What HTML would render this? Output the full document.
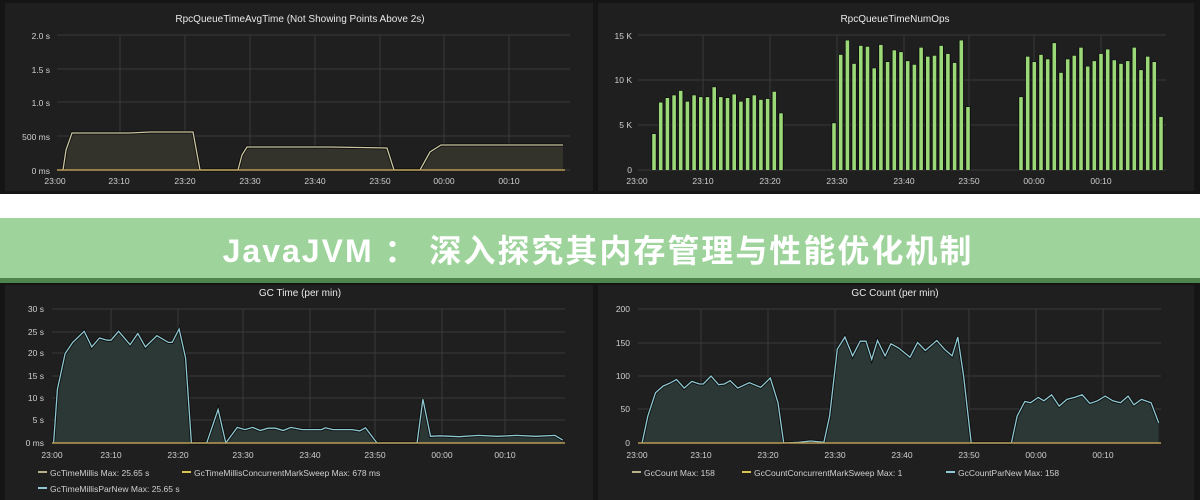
<!DOCTYPE html>
<html><head><meta charset="utf-8"><style>
html,body{margin:0;padding:0;width:1200px;height:500px;overflow:hidden;background:#fff}
svg{display:block}
text{font-family:"Liberation Sans",sans-serif}
</style></head><body>
<svg id="s" width="1200" height="500" viewBox="0 0 1200 500" xmlns="http://www.w3.org/2000/svg">
<rect x="0" y="0" width="1200" height="194" fill="#151515"/>
<rect x="5" y="3" width="588" height="188" fill="#1f1f1f"/>
<rect x="598" y="3" width="596" height="188" fill="#1f1f1f"/>
<rect x="0" y="218" width="1200" height="60" fill="#9ed49c"/>
<rect x="0" y="278" width="1200" height="5" fill="#4e854d"/>
<rect x="0" y="283" width="1200" height="217" fill="#151515"/>
<rect x="5" y="285" width="588" height="215" fill="#1f1f1f"/>
<rect x="598" y="285" width="596" height="215" fill="#1f1f1f"/>
<g id="grid" stroke="#3a3a3a" stroke-width="1"></g>
<g id="plots"></g>
<g fill="#e8e8e8" font-size="10" text-anchor="middle">
<text x="300" y="22">RpcQueueTimeAvgTime (Not Showing Points Above 2s)</text>
<text x="895" y="22">RpcQueueTimeNumOps</text>
<text x="300" y="296">GC Time (per min)</text>
<text x="895" y="296">GC Count (per min)</text>
</g>
<g fill="#cfcfcf" font-size="8.5" text-anchor="end">
<text x="50" y="39">2.0 s</text><text x="50" y="73">1.5 s</text><text x="50" y="106">1.0 s</text><text x="50" y="140">500 ms</text><text x="50" y="174">0 ms</text>
<text x="632" y="39">15 K</text><text x="632" y="83">10 K</text><text x="632" y="128">5 K</text><text x="632" y="173">0</text>
<text x="44" y="312">30 s</text><text x="44" y="335">25 s</text><text x="44" y="356">20 s</text><text x="44" y="379">15 s</text><text x="44" y="401">10 s</text><text x="44" y="423">5 s</text><text x="44" y="446">0 ms</text>
<text x="630" y="312">200</text><text x="630" y="346">150</text><text x="630" y="379">100</text><text x="630" y="412">50</text><text x="630" y="446">0</text>
</g>
<g fill="#cfcfcf" font-size="8.5" text-anchor="middle">
<text x="55" y="184">23:00</text><text x="119" y="184">23:10</text><text x="185" y="184">23:20</text><text x="250" y="184">23:30</text><text x="315" y="184">23:40</text><text x="380" y="184">23:50</text><text x="444" y="184">00:00</text><text x="509" y="184">00:10</text>
<text x="637" y="184">23:00</text><text x="703" y="184">23:10</text><text x="770" y="184">23:20</text><text x="837" y="184">23:30</text><text x="904" y="184">23:40</text><text x="969" y="184">23:50</text><text x="1034" y="184">00:00</text><text x="1101" y="184">00:10</text>
<text x="52" y="458">23:00</text><text x="111" y="458">23:10</text><text x="178" y="458">23:20</text><text x="243" y="458">23:30</text><text x="310" y="458">23:40</text><text x="375" y="458">23:50</text><text x="442" y="458">00:00</text><text x="505" y="458">00:10</text>
<text x="637" y="458">23:00</text><text x="701" y="458">23:10</text><text x="768" y="458">23:20</text><text x="835" y="458">23:30</text><text x="902" y="458">23:40</text><text x="969" y="458">23:50</text><text x="1036" y="458">00:00</text><text x="1103" y="458">00:10</text>
</g>
<g font-size="8.5" fill="#d0d0d0">
<rect x="38" y="471" width="9" height="2" fill="#b5b28a"/><text x="50" y="476">GcTimeMillis  Max: 25.65 s</text>
<rect x="182" y="471" width="9" height="2" fill="#d8c24a"/><text x="194" y="476">GcTimeMillisConcurrentMarkSweep  Max: 678 ms</text>
<rect x="38" y="487" width="9" height="2" fill="#8fc8d2"/><text x="50" y="492">GcTimeMillisParNew  Max: 25.65 s</text>
<rect x="632" y="471" width="9" height="2" fill="#b5b28a"/><text x="644" y="476">GcCount  Max: 158</text>
<rect x="742" y="471" width="9" height="2" fill="#d8c24a"/><text x="754" y="476">GcCountConcurrentMarkSweep  Max: 1</text>
<rect x="946" y="471" width="9" height="2" fill="#8fc8d2"/><text x="958" y="476">GcCountParNew  Max: 158</text>
</g>
<text x="598" y="262" text-anchor="middle" font-size="32" font-weight="bold" letter-spacing="2" fill="#ffffff" style="font-family:'Liberation Sans','Noto Sans CJK SC',sans-serif">JavaJVM ： 深入探究其内存管理与性能优化机制</text>
</svg>
<script>
var NS="http://www.w3.org/2000/svg";
function el(p,t,a){var e=document.createElementNS(NS,t);for(var k in a)e.setAttribute(k,a[k]);document.getElementById(p).appendChild(e);return e;}
function grid(x0,x1,ys,xs,yb,yt){ys.forEach(function(y){el("grid","line",{x1:x0,x2:x1,y1:y,y2:y});});xs.forEach(function(x){el("grid","line",{x1:x,x2:x,y1:yt,y2:yb});});}
grid(57,570,[35,69,102,136,170],[120,185,250,315,380,444,509],170,35);
grid(638,1166,[35,80,125,170],[703,770,837,904,969,1034,1101],170,35);
grid(52,565,[309,332,353,376,398,420,443],[111,178,243,310,375,442,505],443,309);
grid(638,1161,[309,343,376,409,443],[701,768,835,902,969,1036,1103],443,309);
function area(pts,base,fill,stroke){var d="M"+pts[0][0]+","+base;pts.forEach(function(p){d+=" L"+p[0].toFixed(1)+","+p[1].toFixed(1);});d+=" L"+pts[pts.length-1][0].toFixed(1)+","+base+"Z";
el("plots","path",{d:d,fill:fill});var l="M"+pts.map(function(p){return p[0].toFixed(1)+","+p[1].toFixed(1)}).join(" L");
el("plots","path",{d:l,fill:"none",stroke:"#0a0a0a","stroke-width":3});el("plots","path",{d:l,fill:"none",stroke:stroke,"stroke-width":1.3});}
var tl=[[63,170],[66,150],[72,133],[130,133],[150,132],[193,132],[200,170],[238,170],[242,155],[247,147],[330,147],[387,148],[394,170],[420,170],[430,152],[441,145],[563,145]];
area(tl,170,"#33332b","#cbc6a2");
el("plots","line",{x1:57,x2:565,y1:170,y2:170,stroke:"#b89a55","stroke-width":1.5});
var g1=[4,7.5,8,8.3,8.8,7.6,8.3,8.1,8.1,9.2,8.1,8,8.4,7.6,8,8.3,7.8,7.9,8.7,6.3],
g2=[5.2,12.8,14.4,11.8,13.8,13.7,11.3,13.9,12,13.3,13.1,12.1,11.7,13.6,12.6,12.7,13.8,12.9,11.9,14.4,7],
g3=[8.1,12.6,12,12.8,12.3,14.1,10.8,12.3,12.7,13.6,11.5,12.1,12.9,13.4,12.2,11.8,12.1,13.6,11.1,12.6,12,5.9];
function bars(g,x0,x1){var step=(x1-x0)/(g.length-1);g.forEach(function(v,i){var x=x0+i*step,y=170-v*9;el("plots","rect",{x:(x-2.6).toFixed(1),y:(y-0.5).toFixed(1),width:5.2,height:(170-y+0.5).toFixed(1),fill:"#0a0a0a"});el("plots","rect",{x:(x-1.8).toFixed(1),y:y.toFixed(1),width:3.6,height:(170-y).toFixed(1),fill:"#9bd877"});});}
bars(g1,654,781);bars(g2,834,968);bars(g3,1021,1161);
var gt=[[140,0],[150,12],[170,20],[190,22.5],[220,25],[240,21.5],[260,23.5],[280,23],[290,23],[310,25],[340,22],[360,24.5],[380,21.5],[410,24],[440,22.5],[450,22.5],[468,25.5],[485,19],[500,0],[540,0],[570,7.5],[590,0],[620,3.5],[640,3],[660,3.5],[680,2.8],[700,3.3],[720,3.3],[740,2.8],[760,3.5],[790,3],[840,3],[850,3.4],[870,3],[920,3],[940,2.7],[955,3.4],[985,0],[1090,0],[1105,9.8],[1125,1.5],[1150,1.6],[1200,1.4],[1250,1.7],[1300,1.5],[1350,1.7],[1400,1.5],[1450,1.7],[1470,0.7]];
area(gt.map(function(p){return [p[0]/2.613,443-p[1]*4.47]}),443,"#2c3836","#8fc8d2");
el("plots","line",{x1:52,x2:565,y1:443,y2:443,stroke:"#b89a55","stroke-width":1.5});
var gc=[[110,0],[125,40],[145,75],[165,85],[185,90],[200,95],[220,82],[240,92],[260,88],[270,88],[290,100],[310,87],[325,88],[340,93],[360,82],[390,90],[420,83],[445,97],[465,60],[480,0],[520,1],[550,3],[585,1],[600,40],[620,140],[640,158],[660,130],[680,152],[695,152],[710,125],[725,153],[745,130],[760,148],[780,142],[810,128],[830,150],[850,138],[880,153],[900,140],[920,130],[935,158],[950,100],[970,0],[1075,0],[1090,40],[1110,62],[1125,60],[1145,68],[1160,63],[1180,72],[1200,55],[1220,65],[1240,68],[1260,72],[1280,59],[1300,63],[1320,70],[1340,63],[1360,60],[1380,70],[1395,57],[1415,65],[1440,60],[1460,30]];
area(gc.map(function(p){return [600+p[0]/2.613,443-p[1]*0.67]}),443,"#2c3836","#8fc8d2");
el("plots","line",{x1:638,x2:1161,y1:443,y2:443,stroke:"#b89a55","stroke-width":1.5});
</script>
</body></html>
